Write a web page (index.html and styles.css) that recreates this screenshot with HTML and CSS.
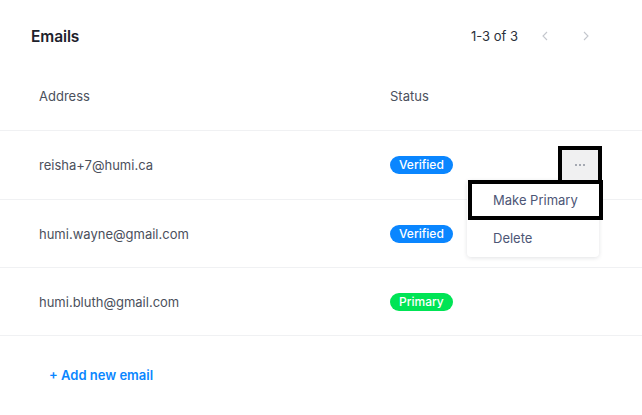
FILE: index.html
```html
<!DOCTYPE html>
<html>
<head>
<meta charset="utf-8">
<link rel="stylesheet" href="styles.css">
</head>
<body>
<div class="card">
  <div class="header">
    <h2 class="title">Emails</h2>
    <div class="pager">
      <span class="count">1-3 of 3</span>
      <button class="chev" aria-label="Previous">
        <svg width="6" height="10" viewBox="0 0 6 10"><path d="M5 1 1 5l4 4" fill="none" stroke="#c4c7cd" stroke-width="1.1"/></svg>
      </button>
      <button class="chev" aria-label="Next">
        <svg width="6" height="10" viewBox="0 0 6 10"><path d="M1 1l4 4-4 4" fill="none" stroke="#c4c7cd" stroke-width="1.1"/></svg>
      </button>
    </div>
  </div>
  <div class="row head">
    <div class="cell">Address</div>
    <div class="cell">Status</div>
    <div class="cell"></div>
  </div>
  <div class="row tall">
    <div class="cell">reisha+7@humi.ca</div>
    <div class="cell"><span class="badge verified">Verified</span></div>
    <div class="cell action">
      <button class="dots" aria-label="More"><span></span><span></span><span></span></button>
      <div class="menu">
        <div class="item active">Make Primary</div>
        <div class="item">Delete</div>
      </div>
    </div>
  </div>
  <div class="row">
    <div class="cell">humi.wayne@gmail.com</div>
    <div class="cell"><span class="badge verified">Verified</span></div>
    <div class="cell"></div>
  </div>
  <div class="row">
    <div class="cell">humi.bluth@gmail.com</div>
    <div class="cell"><span class="badge primary">Primary</span></div>
    <div class="cell"></div>
  </div>
  <div class="footer">
    <a class="add" href="#">+ Add new email</a>
  </div>
</div>
</body>
</html>
```
FILE: styles.css
```css
* { box-sizing: border-box; }
html, body { margin: 0; background: #fff; }
body {
  font-family: Inter, "Noto Sans", sans-serif;
  font-size: 13px;
  color: #4b505c;
}
.card { width: 642px; }
.header {
  height: 62px;
  padding: 10px 40px 0 31px;
  display: flex;
  align-items: center;
  justify-content: space-between;
}
.title {
  margin: 0;
  font-size: 15.5px;
  font-weight: 600;
  color: #1d222c;
  letter-spacing: -0.1px;
}
.pager { display: flex; align-items: center; gap: 9px; }
.count { color: #2b303a; margin-right: 2px; }
.chev {
  width: 32px; height: 28px;
  border: 0; background: none; padding: 0;
  display: flex; align-items: center; justify-content: center;
}
.row {
  display: grid;
  grid-template-columns: 351px 1fr 36px;
  align-items: center;
  height: 68px;
  padding: 0 44px 0 39px;
  border-bottom: 1px solid #f0f1f3;
}
.row.head, .row.tall { height: 69px; }
.head { color: #4b505c; }
.cell { position: relative; }
.badge {
  display: inline-block;
  height: 18px;
  line-height: 18px;
  padding: 0 9px;
  border-radius: 9px;
  color: #fff;
  font-size: 12px;
  font-weight: 500;
  min-width: 62px;
  text-align: center;
}
.verified { background: #0a86ff; }
.primary { background: #00e455; }
.action { height: 30px; }
.dots {
  width: 36px; height: 30px;
  border: 0; padding: 0;
  background: #f0f0f1;
  outline: 4px solid #000;
  display: flex; align-items: center; justify-content: center; gap: 2px;
  position: relative; z-index: 2;
}
.dots span { width: 2px; height: 2px; border-radius: 50%; background: #8d929c; }
.menu {
  position: absolute;
  top: 30px;
  right: -1px;
  width: 132px;
  padding: 4px 0 1px 5px;
  background: #fff;
  border-radius: 4px;
  box-shadow: 0 1px 4px rgba(20, 30, 50, 0.13);
  z-index: 1;
}
.item {
  height: 36px;
  display: flex;
  align-items: center;
  padding-left: 21px;
  color: #4d5676;
  font-size: 13px;
}
.item.active { height: 32px; outline: 4px solid #000; margin-bottom: 4px; }
.footer {
  height: 78px;
  padding: 0 49px;
  display: flex;
  align-items: center;
}
.add {
  color: #0a86ff;
  font-weight: 600;
  text-decoration: none;
  font-size: 13px;
}
```
